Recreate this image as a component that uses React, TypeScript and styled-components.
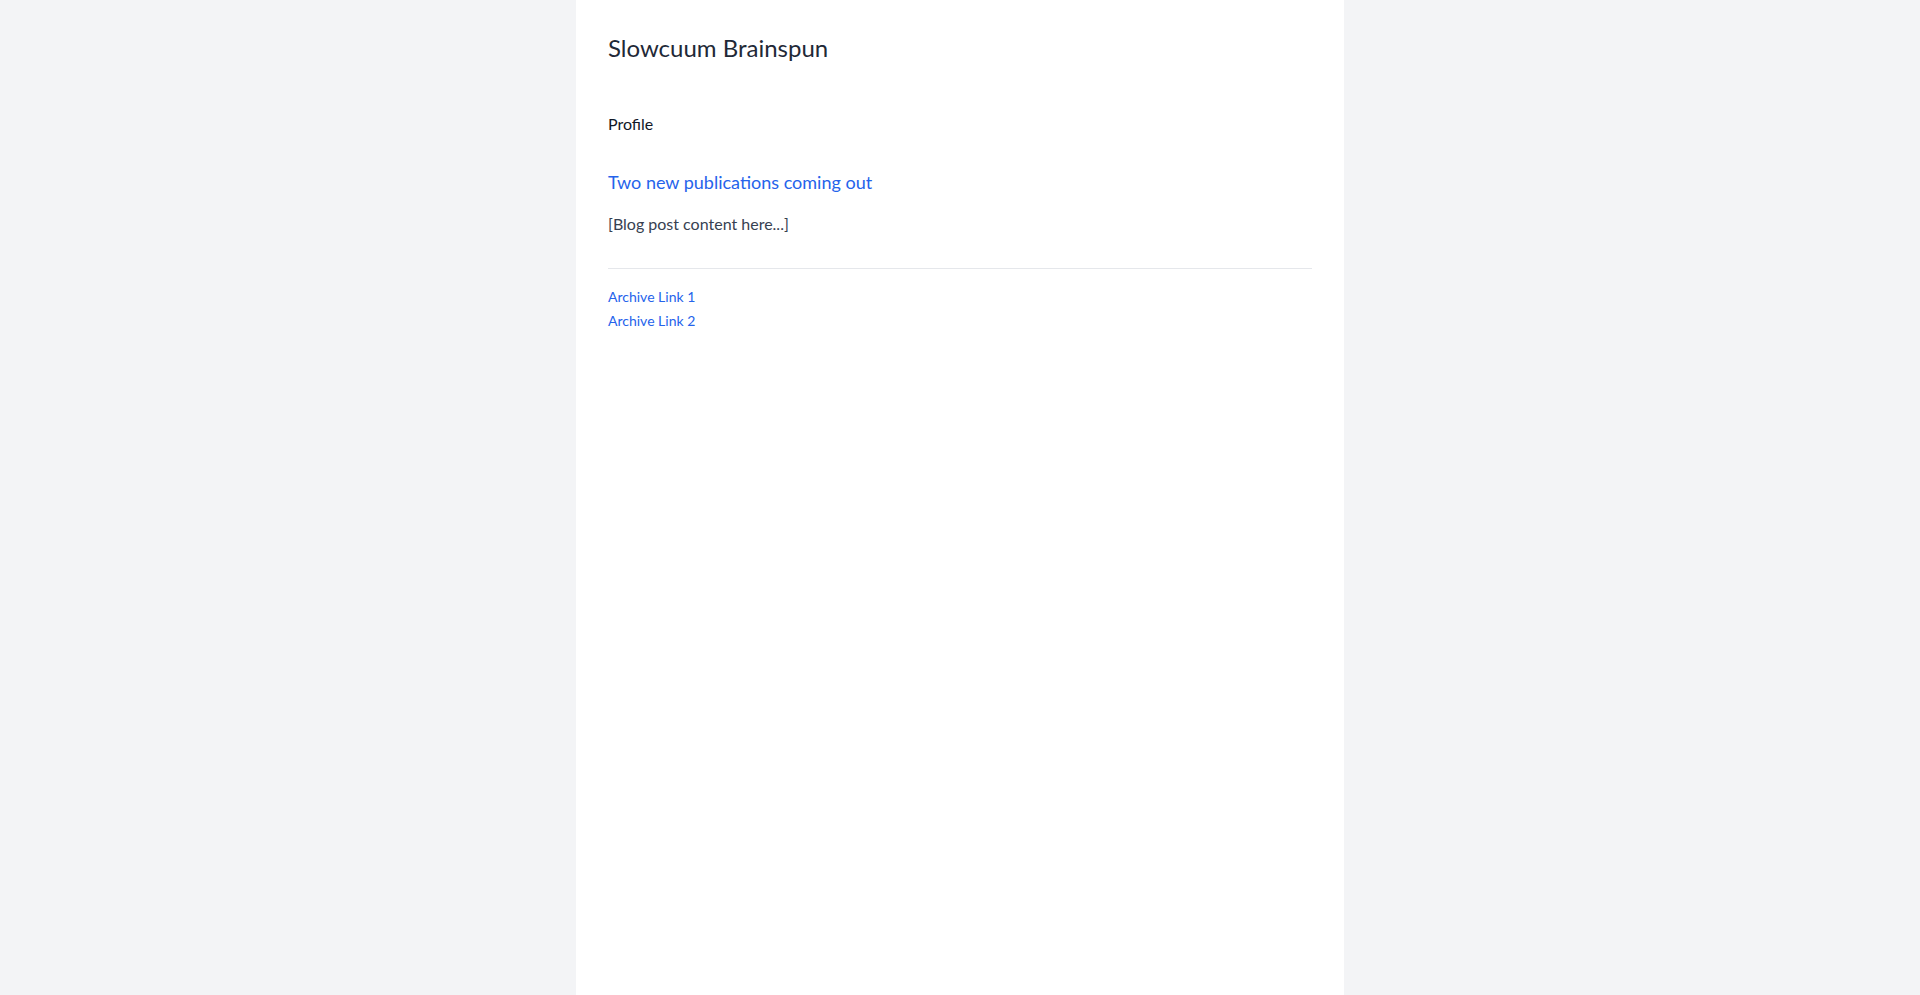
import React from "react";
import styled, { createGlobalStyle } from "styled-components";

const Global = createGlobalStyle`
  html, body { margin: 0; padding: 0; background: #f3f4f6; }
  body { font-family: Lato, "Noto Sans", sans-serif; }
  * { box-sizing: border-box; }
`;

const Page = styled.div`
  max-width: 768px;
  margin: 0 auto;
  min-height: 100vh;
  background: #ffffff;
  padding: 32px;
`;

const Header = styled.header`
  margin-bottom: 48px;
`;

const SiteTitle = styled.h1`
  margin: 0;
  font-size: 24px;
  line-height: 32px;
  font-weight: 400;
  color: #1f2937;
`;

const Nav = styled.nav`
  margin-bottom: 32px;
`;

const NavLink = styled.a`
  font-size: 16px;
  line-height: 24px;
  color: #111827;
  text-decoration: none;
`;

const Post = styled.article`
  padding-bottom: 32px;
  border-bottom: 1px solid #e5e7eb;
  margin-bottom: 16px;
`;

const PostTitle = styled.h2`
  margin: 0 0 16px;
  font-size: 18px;
  line-height: 28px;
  font-weight: 400;
  color: #2563eb;
`;

const PostBody = styled.p`
  margin: 0;
  font-size: 16px;
  line-height: 24px;
  color: #374151;
`;

const ArchiveList = styled.ul`
  list-style: none;
  margin: 0;
  padding: 0;
`;

const ArchiveLink = styled.a`
  display: block;
  font-size: 14px;
  line-height: 24px;
  color: #2563eb;
  text-decoration: none;
`;

export default function App() {
  return (
    <>
      <Global />
      <Page>
        <Header>
          <SiteTitle>Slowcuum Brainspun</SiteTitle>
        </Header>
        <Nav>
          <NavLink href="#">Profile</NavLink>
        </Nav>
        <Post>
          <PostTitle>Two new publications coming out</PostTitle>
          <PostBody>[Blog post content here...]</PostBody>
        </Post>
        <ArchiveList>
          <li><ArchiveLink href="#">Archive Link 1</ArchiveLink></li>
          <li><ArchiveLink href="#">Archive Link 2</ArchiveLink></li>
        </ArchiveList>
      </Page>
    </>
  );
}
